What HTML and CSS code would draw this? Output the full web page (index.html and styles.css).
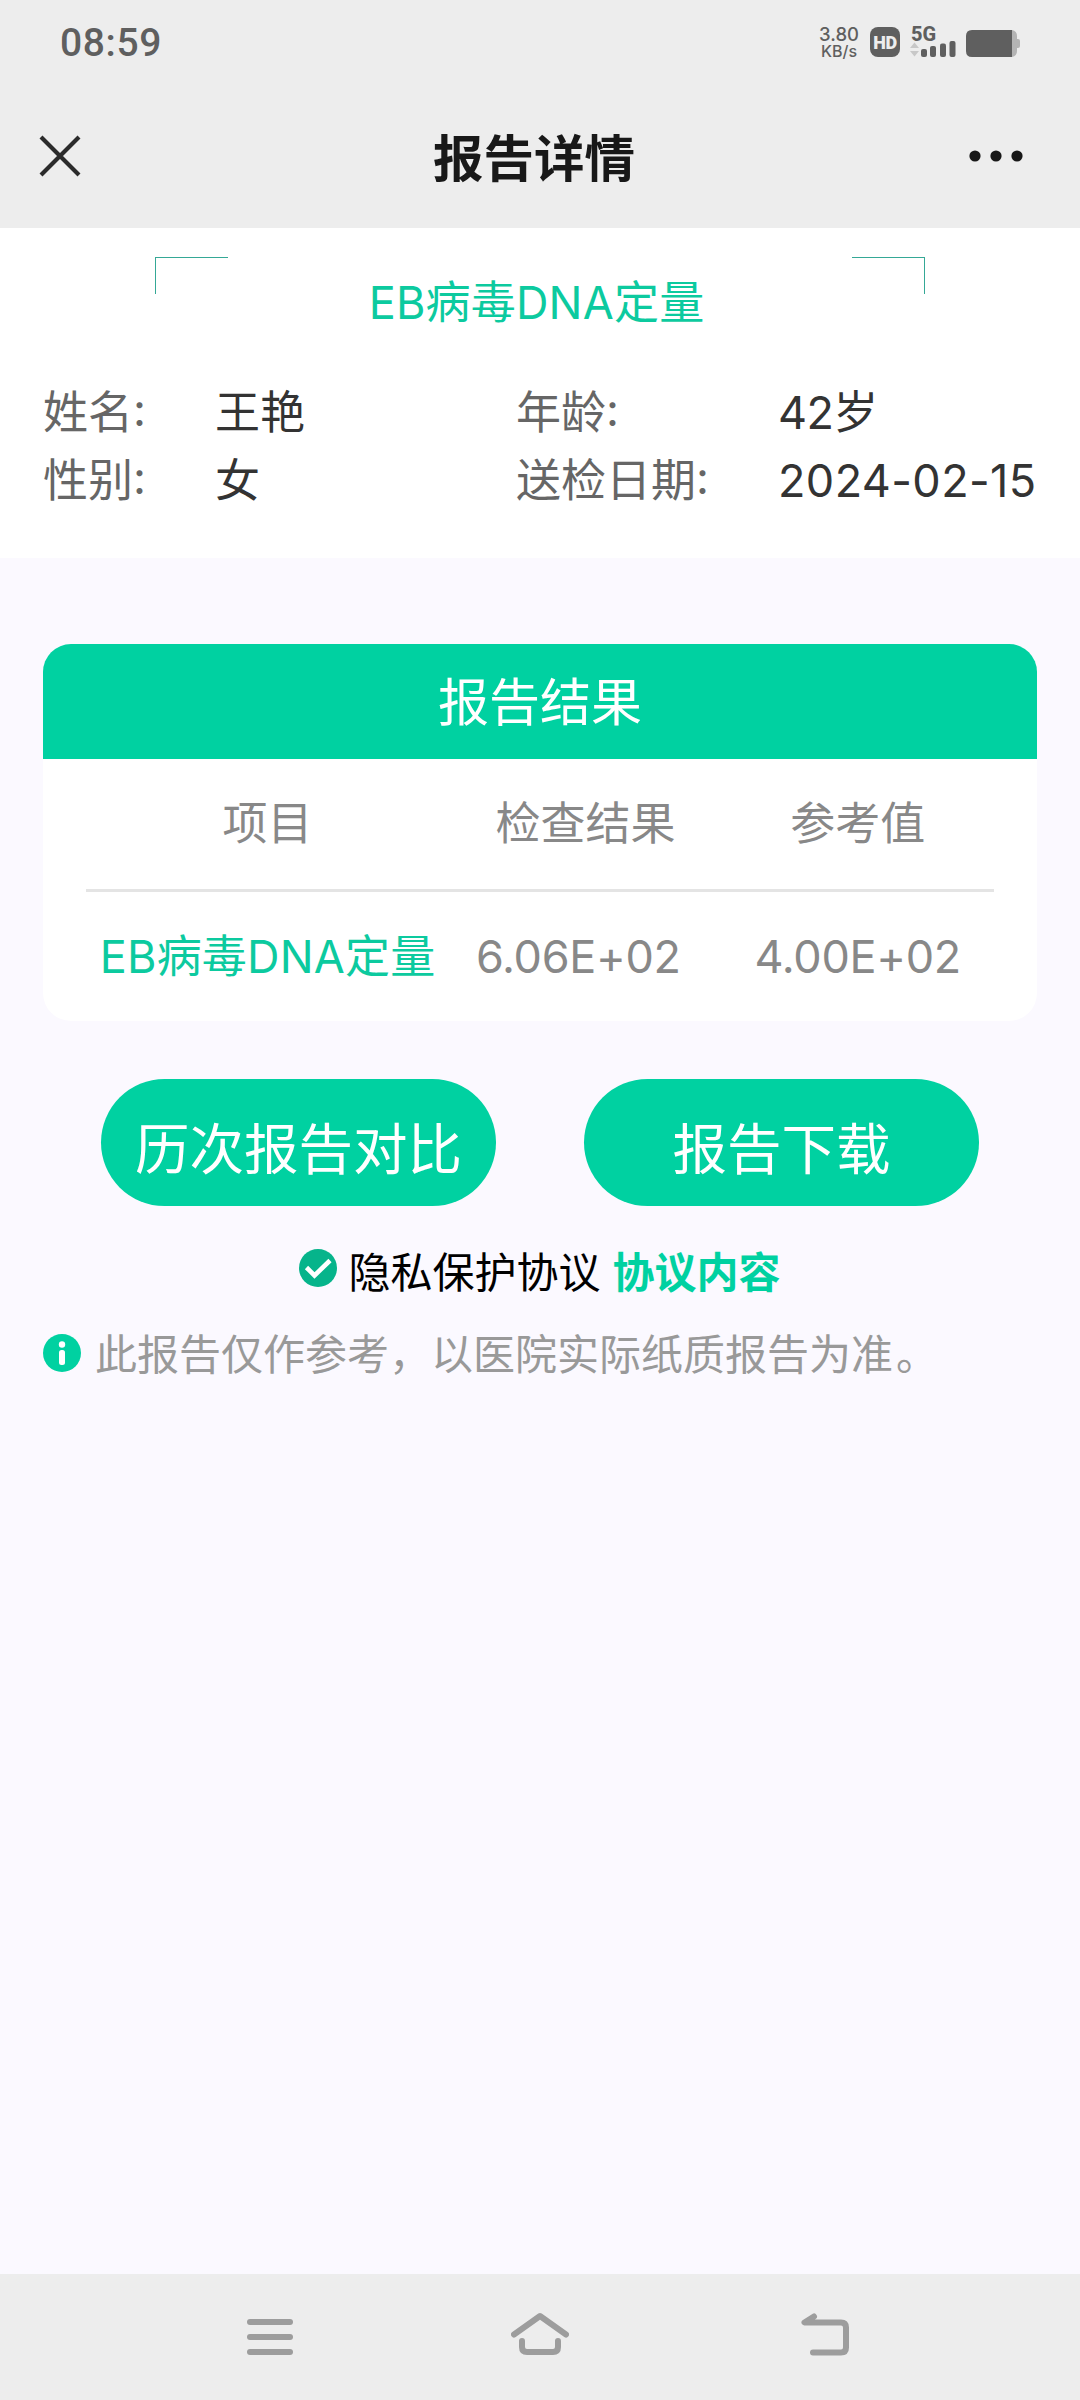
FILE: index.html
```html
<!DOCTYPE html>
<html lang="zh-CN">
<head>
<meta charset="utf-8">
<title>报告详情</title>
<link rel="stylesheet" href="styles.css">
</head>
<body>
<div class="screen">
  <div class="status">
    <span class="clock">08:59</span>
    <div class="status-right">
      <div class="speed"><span class="rate">3.80</span><span class="unit">KB/s</span></div>
      <span class="hd">HD</span>
      <div class="signal">
        <span class="net">5G</span>
        <svg width="46" height="18" viewBox="0 0 46 18">
          <path d="M0 7 L4.5 1.5 L9 7Z M0 10 L4.5 15.500 L9 10Z" fill="#c8c8c8"/>
          <g fill="#5f5f5f"><rect x="11" y="8" width="6" height="8" rx="2"/><rect x="20" y="5" width="6" height="11" rx="2"/><rect x="30" y="2.500" width="6" height="13.500" rx="2"/><rect x="39.500" y="0" width="6" height="16" rx="2"/></g>
        </svg>
      </div>
      <svg class="battery" width="54" height="27" viewBox="0 0 54 27">
        <path d="M46 0 Q51 1 51 6 V9 H52 Q54 9 54 11 V16 Q54 18 52 18 H51 V21 Q51 26 46 27Z" fill="#b4b4b4"/>
        <path d="M46 0 H6 Q0 0 0 6 V21 Q0 27 6 27 H46Z" fill="#5f5f5f"/>
      </svg>
    </div>
  </div>
  <header class="navbar">
    <svg width="42" height="42" viewBox="0 0 42 42"><path d="M2 2 L40 40 M40 2 L2 40" stroke="#2b2b2b" stroke-width="4.200"/></svg>
    <h1>报告详情</h1>
    <svg width="54" height="12" viewBox="0 0 54 12" fill="#181818"><circle cx="6" cy="6" r="5.600"/><circle cx="27" cy="6" r="5.600"/><circle cx="48" cy="6" r="5.600"/></svg>
  </header>

  <section class="patient">
    <div class="frame"><i class="corner left"></i><h2 class="name">EB病毒DNA定量</h2><i class="corner right"></i></div>
    <div class="fields">
      <span class="label">姓名<b>:</b></span><span class="value">王艳</span>
      <span class="label">年龄<b>:</b></span><span class="value age">42岁</span>
      <span class="label">性别<b>:</b></span><span class="value">女</span>
      <span class="label">送检日期<b>:</b></span><span class="value date">2024-02-15</span>
    </div>
  </section>

  <main>
    <section class="card">
      <h2 class="card-title">报告结果</h2>
      <div class="row head"><span>项目</span><span>检查结果</span><span>参考值</span></div>
      <div class="row data"><span class="item">EB病毒DNA定量</span><span class="result">6.06E+02</span><span class="ref">4.00E+02</span></div>
    </section>
    <div class="actions"><a class="btn">历次报告对比</a><a class="btn">报告下载</a></div>
    <div class="agree">
      <svg width="38" height="38" viewBox="0 0 38 38"><circle cx="19" cy="19" r="19" fill="#06b48b"/><path d="M7.500 18.500 L15.500 26.500 L31 11.500" fill="none" stroke="#fff" stroke-width="4.600"/></svg>
      <span class="agree-text">隐私保护协议</span><a class="link">协议内容</a>
    </div>
    <div class="notice">
      <svg width="38" height="38" viewBox="0 0 38 38"><circle cx="19" cy="19" r="19" fill="#00d1a1"/><circle cx="19" cy="10.500" r="3.200" fill="#fff"/><rect x="16" y="16" width="6" height="15" rx="2.500" fill="#fff"/></svg>
      <span>此报告仅作参考，以医院实际纸质报告为准<span class="stop">。</span></span>
    </div>
  </main>

  <nav class="sysnav">
    <svg width="46" height="36" viewBox="0 0 46 36" fill="#9d9d9d"><rect width="46" height="6" rx="3"/><rect y="15" width="46" height="6" rx="3"/><rect y="30" width="46" height="6" rx="3"/></svg>
    <svg class="home" width="58" height="44" viewBox="0 0 58 44" fill="none" stroke="#9d9d9d" stroke-width="6" stroke-linecap="round" stroke-linejoin="round"><path d="M3 22.500 L29 4 L55 22.500"/><path d="M11 29 V35 Q11 40 16 40 H42 Q47 40 47 35 V29"/></svg>
    <svg class="back" width="48" height="43" viewBox="0 0 48 43" fill="none" stroke="#9d9d9d" stroke-width="6" stroke-linecap="round" stroke-linejoin="round"><path d="M13 3.500 L3.500 9.500 H40 Q45 9.500 45 14.500 V34.500 Q45 39.500 40 39.500 H12"/></svg>
  </nav>
</div>
</body>
</html>
```
FILE: styles.css
```css
* { box-sizing: border-box; margin: 0; padding: 0; }
body { width: 1080px; height: 2400px; background: #fbf9ff; font-family: Inter, "Noto Sans CJK SC", sans-serif; font-weight: 400; }
svg { display: block; flex: none; }
h1, h2 { font-weight: 400; }
.screen { display: flex; flex-direction: column; height: 2400px; }

.status { display: flex; justify-content: space-between; height: 84px; padding: 0 60px; background: #ededed; color: #5f5f5f; }
.clock { font: 500 39px/86px Roboto, sans-serif; letter-spacing: .6px; }
.status-right { display: flex; padding-top: 27px; }
.speed { display: flex; flex-direction: column; align-items: center; width: 40px; margin-right: 11px; font-weight: 500; white-space: nowrap; }
.rate { font-size: 18.500px; line-height: 14px; }
.unit { margin-top: 4px; font-size: 16px; line-height: 13px; }
.hd { width: 30px; height: 30px; margin-right: 10px; border-radius: 8px; background: #5f5f5f; color: #ededed; font: 900 18px/31px Roboto, sans-serif; text-align: center; letter-spacing: -.3px; }
.signal { display: flex; flex-direction: column; width: 46px; margin-right: 10px; }
.net { height: 14px; padding-left: 1px; font: 800 20px/15px Roboto, sans-serif; }
.battery { margin-top: 3px; }

.navbar { display: flex; align-items: center; height: 144px; padding: 0 57px 0 39px; background: #ededed; color: #181818; }
.navbar h1 { flex: 1; padding: 6px 0 0 18px; font-size: 50.500px; font-weight: 600; line-height: 60px; text-align: center; }

.patient { height: 330px; padding: 29px 43px 0; background: #fff; }
.frame { display: flex; justify-content: space-between; height: 120px; padding: 0 112px; }
.corner { width: 73px; height: 37px; border-top: 1px solid #35a896; }
.left { border-left: 1px solid #35a896; }
.right { border-right: 1px solid #35a896; }
.name { padding: 16px 7px 0 0; color: #0cca9f; font-size: 45px; line-height: 60px; letter-spacing: .2px; }
.fields { display: grid; grid-template-columns: 172px 301px 262px 259px; grid-auto-rows: 68px; padding-top: 1.500px; font-size: 45px; line-height: 68px; color: #333; white-space: nowrap; }
.label { color: #666; }
.label b { font-weight: 400; vertical-align: 3px; line-height: 1; }
.age { letter-spacing: -.6px; }
.date { letter-spacing: .4px; }

main { flex: 1; padding: 86px 43px 0; }
.card { height: 377px; border-radius: 28px; overflow: hidden; background: #fff; }
.card-title { height: 115px; background: #00d1a1; color: #fff; font-size: 51px; line-height: 117px; text-align: center; }
.row { display: grid; grid-template-columns: 40% 30% 30%; margin: 0 43px; color: #888; font-size: 45px; text-align: center; white-space: nowrap; }
.head { height: 133px; border-bottom: 3px solid #e4e4e4; line-height: 130px; }
.data { line-height: 130px; }
.item { color: #0cca9f; letter-spacing: .2px; }
.result { padding-right: 14px; letter-spacing: -.3px; }
.ref { letter-spacing: -.3px; }

.actions { display: flex; gap: 88px; margin: 58px 58px 0; }
.btn { width: 395px; height: 127px; padding-top: 10px; border-radius: 64px; background: #00d1a1; color: #fff; font-size: 54.500px; line-height: 120px; text-align: center; }
.agree { display: flex; justify-content: center; height: 60px; margin-top: 36px; padding: 7px 0 0; font-size: 42px; line-height: 48px; color: #000; }
.agree-text { margin: 0 12px 0 11px; }
.link { color: #00d1a1; font-weight: 700; }
.notice { display: flex; gap: 14px; margin-top: 32px; font-size: 42px; line-height: 42px; color: #999; }
.stop { padding-left: 3px; }

.sysnav { display: flex; height: 126px; padding: 45px 0 0 247px; background: #ededed; }
.home { margin: -7px 232px 0 218px; }
.back { margin-top: -6px; }
```
